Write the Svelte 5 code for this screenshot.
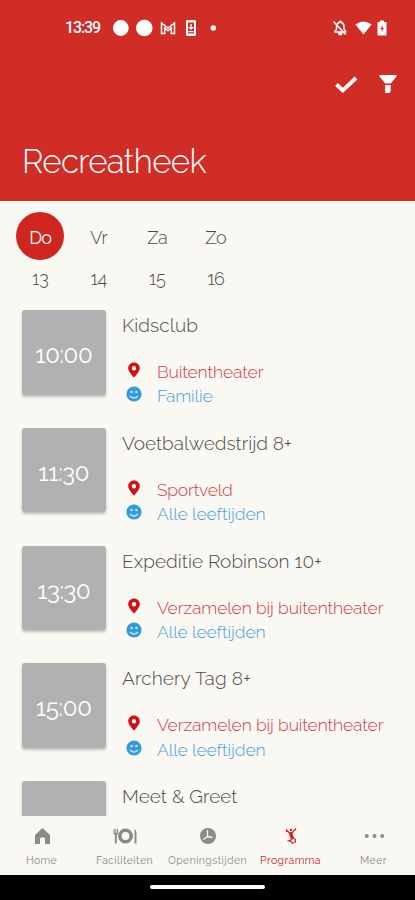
<script lang="ts">
  interface Activity {
    time: string;
    timeWidth: number;
    title: string;
    titleWidth: number;
    place: string;
    placeWidth: number;
    audience: string;
    audienceWidth: number;
  }

  const days = [
    { name: 'Do', date: '13', width: 22, active: true },
    { name: 'Vr', date: '14', width: 17, active: false },
    { name: 'Za', date: '15', width: 20, active: false },
    { name: 'Zo', date: '16', width: 21, active: false }
  ];

  const activities: Activity[] = [
    { time: '10:00', timeWidth: 57, title: 'Kidsclub', titleWidth: 76, place: 'Buitentheater', placeWidth: 106.5, audience: 'Familie', audienceWidth: 55.5 },
    { time: '11:30', timeWidth: 51, title: 'Voetbalwedstrijd 8+', titleWidth: 170, place: 'Sportveld', placeWidth: 75.5, audience: 'Alle leeftijden', audienceWidth: 108.5 },
    { time: '13:30', timeWidth: 53, title: 'Expeditie Robinson 10+', titleWidth: 200, place: 'Verzamelen bij buitentheater', placeWidth: 226.5, audience: 'Alle leeftijden', audienceWidth: 108.5 },
    { time: '15:00', timeWidth: 56, title: 'Archery Tag 8+', titleWidth: 129, place: 'Verzamelen bij buitentheater', placeWidth: 226.5, audience: 'Alle leeftijden', audienceWidth: 108.5 },
    { time: '', timeWidth: 0, title: 'Meet & Greet', titleWidth: 115.5, place: '', placeWidth: 0, audience: '', audienceWidth: 0 }
  ];

  const tabs = [
    { id: 'home', label: 'Home', width: 31 },
    { id: 'food', label: 'Faciliteiten', width: 57 },
    { id: 'clock', label: 'Openingstijden', width: 79 },
    { id: 'program', label: 'Programma', width: 61 },
    { id: 'more', label: 'Meer', width: 27 }
  ];

  const activeTab = 'program';

  // Spreads the letters so the text takes the given width
  function fit(node: HTMLElement, width: number) {
    const count = (node.textContent || '').length;
    if (!width || !count) return;
    const spacing = (width - node.getBoundingClientRect().width) / count;
    node.style.letterSpacing = `${spacing}px`;
  }
</script>

<div class="screen">
  <header class="header">
    <div class="status-bar">
      <span class="clock" use:fit={35}>13:39</span>
      <svg class="status-left" width="110" height="20" viewBox="0 0 110 20" fill="#fff">
        <circle cx="12.8" cy="10" r="7.9" />
        <circle cx="36.3" cy="10" r="8.3" />
        <path d="M53.500 15.500V5l6.500 5 6.500-5v10.500h-3.200V10L60 12.800 56.700 10v5.500z" fill="none" stroke="#fff" stroke-width="1.500" />
        <path fill-rule="evenodd" d="M79.500 2h7q1.500 0 1.500 1.500v13q0 1.500-1.500 1.500h-7Q78 18 78 16.500v-13Q78 2 79.500 2zM80 4.500v11h6v-11z" />
        <path d="M82.400 6h1.300v3H86l-3 3-3-3h2.400zM80.500 13h5v1.200h-5z" />
        <circle cx="105.300" cy="10" r="2.700" />
      </svg>
      <svg class="status-right" width="56" height="20" viewBox="0 0 56 20" fill="#fff">
        <path d="M3 14V13l1.500-1.500V8.500Q4.500 5 7.500 4.500V3.500h1.600v1Q12 5 12 8.500v3l1.600 1.500v1zM6.700 15h3.200q0 1.700-1.600 1.700T6.700 15z" fill="none" stroke="#fff" stroke-width="1.400" />
        <path d="M1.500 3.500l12 13" stroke="#fff" stroke-width="1.500" />
        <path d="M23.500 6.500Q31.500.5 39.500 6.500L31.500 16.500z" />
        <path fill-rule="evenodd" d="M48 2.500h4V4h1.500q1 0 1 1v11.500q0 1-1 1h-7q-1 0-1-1V5q0-1 1-1H48zM50.500 7l-2.200 4h1.400v3l2.200-4h-1.400z" />
      </svg>
    </div>
    <div class="actions">
      <svg width="24" height="20" viewBox="0 0 24 20">
        <path d="M2.500 10.500l6.300 6L22 4" fill="none" stroke="#fff" stroke-width="3.800" />
      </svg>
      <svg width="20" height="20" viewBox="0 0 20 20" fill="#fff">
        <path d="M1.500 1h17v1.500L12.800 9.500H7.200L1.500 2.500zM7.200 11h5.400v6.500l-1.500 1.500H7.200z" />
      </svg>
    </div>
    <h1><span use:fit={184}>Recreatheek</span></h1>
  </header>

  <nav class="days">
    {#each days as day}
      <button class="day">
        <span class="day-name" class:active={day.active}><span use:fit={day.width}>{day.name}</span></span>
        <span class="day-date"><span use:fit={16.5}>{day.date}</span></span>
      </button>
    {/each}
  </nav>

  <main class="activities">
    {#each activities as activity}
      <article class="activity">
        <div class="time"><span use:fit={activity.timeWidth}>{activity.time}</span></div>
        <div class="info">
          <h2><span use:fit={activity.titleWidth}>{activity.title}</span></h2>
          {#if activity.place}
            <p class="place">
              <svg width="16" height="18" viewBox="0 0 16 18">
                <path fill-rule="evenodd" fill="#cf1118" d="M8 1.500C4.700 1.500 2.200 4 2.200 7.200 2.200 11 8 16.500 8 16.500s5.800-5.500 5.800-9.300C13.800 4 11.300 1.500 8 1.500zm0 3.600a2.200 2.200 0 1 1 0 4.400 2.200 2.200 0 0 1 0-4.400z" />
              </svg>
              <span use:fit={activity.placeWidth}>{activity.place}</span>
            </p>
            <p class="audience">
              <svg width="16" height="18" viewBox="0 0 16 18">
                <circle cx="8" cy="9" r="7.600" fill="#329bdc" />
                <path d="M4 11Q8 15 12 11" fill="none" stroke="#c3e3f7" stroke-width="1.400" />
                <circle cx="5.600" cy="7" r="1.300" fill="#c3e3f7" />
                <circle cx="10.400" cy="7" r="1.300" fill="#c3e3f7" />
              </svg>
              <span use:fit={activity.audienceWidth}>{activity.audience}</span>
            </p>
          {/if}
        </div>
      </article>
    {/each}
  </main>

  <nav class="tabs">
    {#each tabs as tab}
      <button class="tab" class:active={tab.id === activeTab}>
        <svg width="26" height="20" viewBox="0 0 26 20" fill="currentColor">
          {#if tab.id === 'home'}
            <path d="M13.500 2L21 9v9h-5v-5.500q0-1-1-1h-3q-1 0-1 1V18H6V9z" />
          {:else if tab.id === 'food'}
            <circle cx="13.500" cy="10" r="5.700" fill="none" stroke="currentColor" stroke-width="3.600" />
            <path d="M1.500 3v4q0 1.500 1.300 2v8.500h2V9Q6 8.500 6 7V3H5v4H4.300V3h-1v4h-.7V3zM22.500 3q2 1 2 5v9.500h-2z" />
          {:else if tab.id === 'clock'}
            <circle cx="13" cy="10" r="8" />
            <path d="M12.500 4v6.500l-4.500 3M12.500 10.500l5 1" fill="none" stroke="#f9f8f3" stroke-width="1.300" />
          {:else if tab.id === 'program'}
            <g fill="none" stroke="currentColor">
              <path d="M8 3.500l3.500 3.500L14.500 6.500 18 2.500" stroke-width="1.300" />
              <path d="M12.500 7l2 5.500" stroke-width="3.400" />
              <path d="M14.500 12l3 1.500-.5 3.500M14.500 12.500l-3 2.500M9.500 14.800h2.500l2 1.700" stroke-width="1.300" />
            </g>
            <circle cx="13" cy="4" r="1.300" />
            <circle cx="8.700" cy="5.500" r=".8" />
            <circle cx="14.700" cy="17" r="1" />
          {:else}
            <circle cx="5.800" cy="10" r="2" /><circle cx="13.500" cy="10" r="2" /><circle cx="21.200" cy="10" r="2" />
          {/if}
        </svg>
        <span class="tab-label"><span use:fit={tab.width}>{tab.label}</span></span>
      </button>
    {/each}
  </nav>

  <div class="system-bar"><div class="handle"></div></div>
</div>

<style>
  :global(body) {
    margin: 0;
  }

  .screen {
    width: 415px;
    height: 900px;
    display: flex;
    flex-direction: column;
    overflow: hidden;
    background: #f9f8f3;
    font-family: Raleway, Lato, sans-serif;
    font-weight: 300;
    color: #4b4b4b;
  }

  h1,
  h2,
  p {
    margin: 0;
    font-weight: 300;
    white-space: nowrap;
  }

  button {
    border: none;
    background: none;
    padding: 0;
    font: inherit;
    color: inherit;
  }

  svg {
    display: block;
    flex: none;
  }

  .header {
    flex: none;
    height: 201px;
    box-sizing: border-box;
    background: #d02d27;
    color: #fff;
  }

  .status-bar {
    display: flex;
    align-items: center;
    height: 20px;
    padding: 18px 27px 8px 65px;
    line-height: 20px;
  }

  .clock {
    font-family: Roboto, sans-serif;
    font-size: 16px;
    font-weight: 500;
  }

  .status-left {
    margin-left: 8px;
  }

  .status-right {
    margin-left: auto;
  }

  .actions {
    display: flex;
    justify-content: flex-end;
    gap: 20px;
    padding: 28px 17px 0 0;
  }

  h1 {
    padding: 48px 0 0 22px;
    font-size: 33px;
    line-height: 40px;
  }

  .days {
    flex: none;
    display: flex;
    height: 109px;
    padding-left: 11px;
  }

  .day {
    width: 58.500px;
    display: flex;
    flex-direction: column;
    align-items: center;
    padding-top: 11px;
    font-size: 18px;
  }

  .day-name {
    width: 48px;
    height: 48px;
    line-height: 51px;
    border-radius: 50%;
  }

  .day-name.active {
    background: #d02620;
    color: #fff;
    font-weight: 400;
  }

  .day-date {
    margin-top: 8px;
    line-height: 22px;
  }

  .activities {
    flex: 1;
    min-height: 0;
    overflow: hidden;
  }

  .activity {
    display: flex;
    height: 84.500px;
    margin: 0 0 33.250px 21.500px;
  }

  .time {
    flex: none;
    width: 84.500px;
    height: 84.500px;
    border-radius: 3px;
    background: #b1b1b1;
    box-shadow: 0 2px 3px rgba(0, 0, 0, 0.25);
    color: #fff;
    font-size: 24px;
    font-weight: 400;
    line-height: 90px;
    text-align: center;
  }

  .info {
    padding-left: 16px;
  }

  h2 {
    height: 50px;
    font-size: 19px;
    line-height: 31px;
  }

  .place,
  .audience {
    display: flex;
    align-items: center;
    gap: 15px;
    height: 24.200px;
    padding-left: 4px;
    font-size: 17.500px;
    line-height: 24px;
  }

  .place {
    color: #d23a49;
  }

  .audience {
    color: #4a9fdc;
  }

  .place svg,
  .audience svg {
    margin-top: -4px;
  }

  .tabs {
    flex: none;
    display: flex;
    height: 59px;
    background: #f9f8f3;
    color: #8a8a8a;
  }

  .tab {
    width: 83px;
    display: flex;
    flex-direction: column;
    align-items: center;
    padding-top: 10px;
  }

  .tab.active {
    color: #cf2027;
  }

  .tab-label {
    margin-top: 7px;
    font-size: 10.500px;
    font-weight: 400;
    line-height: 14px;
  }

  .system-bar {
    flex: none;
    display: flex;
    justify-content: center;
    height: 25px;
    background: #000;
  }

  .handle {
    width: 115px;
    height: 4px;
    margin-top: 10px;
    border-radius: 2px;
    background: #fff;
  }
</style>
